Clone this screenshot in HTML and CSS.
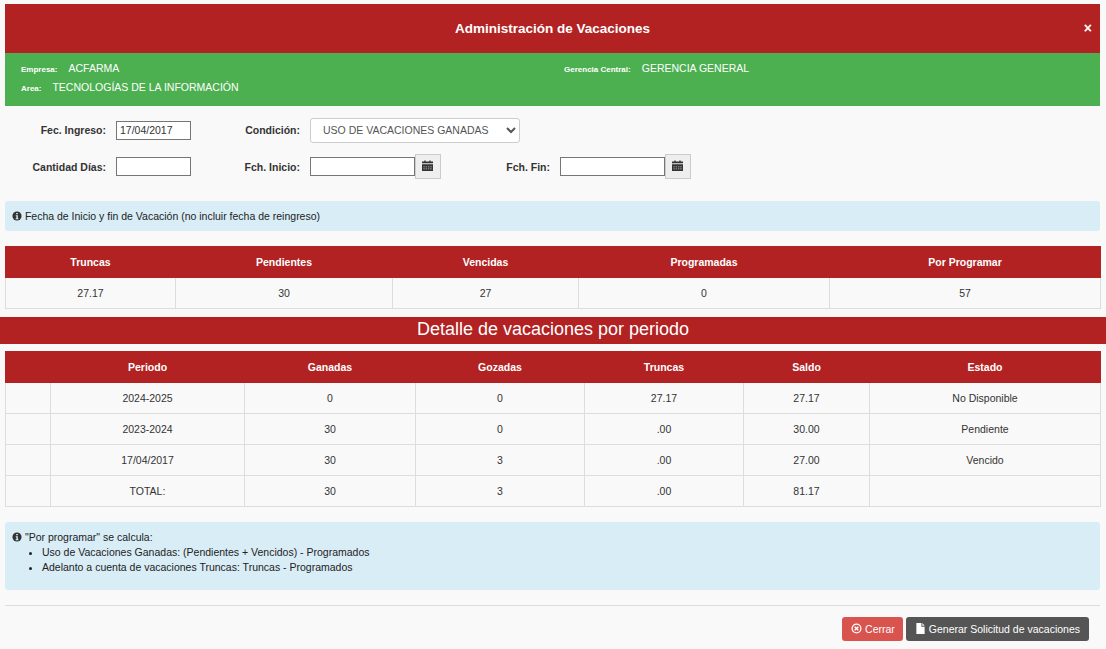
FILE: index.html
```html
<!DOCTYPE html>
<html lang="es">
<head>
<meta charset="utf-8">
<title>Administración de Vacaciones</title>
<link rel="stylesheet" href="styles.css">
</head>
<body>
<div class="wrap">
  <header class="modal-head">
    <h1>Administración de Vacaciones</h1>
    <span class="close">×</span>
  </header>
  <section class="green">
    <div class="green-col">
      <div class="g-row"><span class="g-label">Empresa:</span><span class="g-value">ACFARMA</span></div>
      <div class="g-row"><span class="g-label">Area:</span><span class="g-value">TECNOLOGÍAS DE LA INFORMACIÓN</span></div>
    </div>
    <div class="green-col">
      <div class="g-row"><span class="g-label">Gerencia Central:</span><span class="g-value">GERENCIA GENERAL</span></div>
    </div>
  </section>
  <form class="form">
    <div class="f-row">
      <label class="lab lab-a">Fec. Ingreso:</label>
      <input class="inp inp-s" type="text" value="17/04/2017">
      <label class="lab lab-b">Condición:</label>
      <select class="sel"><option>USO DE VACACIONES GANADAS</option></select>
    </div>
    <div class="f-row f-row2">
      <label class="lab lab-a">Cantidad Días:</label>
      <input class="inp inp-s" type="text">
      <label class="lab lab-b">Fch. Inicio:</label>
      <input class="inp inp-d" type="text">
      <span class="addon"><svg class="cal" viewBox="0 0 12 12"><path d="M2.5 0.5h1.500v1h4v-1h1.500v1h2.500v2H0v-2h2.500z M0 4.500h12V12H0z" fill="#333"/><path d="M1.500 7h1.500v.8H1.500zM4 7h1.500v.8H4zM6.500 7H8v.8H6.500zM9 7h1.500v.8H9zM1.500 9.300h1.500v.8H1.500zM4 9.300h1.500v.8H4zM6.500 9.300H8v.8H6.500zM9 9.300h1.500v.8H9z" fill="#ccc"/></svg></span>
      <label class="lab lab-c">Fch. Fin:</label>
      <input class="inp inp-d" type="text">
      <span class="addon"><svg class="cal" viewBox="0 0 12 12"><path d="M2.5 0.5h1.500v1h4v-1h1.500v1h2.500v2H0v-2h2.500z M0 4.500h12V12H0z" fill="#333"/><path d="M1.500 7h1.500v.8H1.500zM4 7h1.500v.8H4zM6.500 7H8v.8H6.500zM9 7h1.500v.8H9zM1.500 9.300h1.500v.8H1.500zM4 9.300h1.500v.8H4zM6.500 9.300H8v.8H6.500zM9 9.300h1.500v.8H9z" fill="#ccc"/></svg></span>
    </div>
  </form>
  <div class="alert alert-one">
    <svg class="info" viewBox="0 0 12 12"><circle cx="6" cy="6" r="5.500" fill="#333"/><path d="M5 2.300h2v1.700H5zM4.500 5h2.500v3.800h.7V10H4.400V8.800h.9V6.200h-.8z" fill="#d9edf7"/></svg>
    Fecha de Inicio y fin de Vacación (no incluir fecha de reingreso)
  </div>
  <table class="tbl tbl-sum">
    <colgroup><col class="s1"><col class="s2"><col class="s3"><col class="s4"><col class="s5"></colgroup>
    <thead><tr><th>Truncas</th><th>Pendientes</th><th>Vencidas</th><th>Programadas</th><th>Por Programar</th></tr></thead>
    <tbody><tr><td>27.17</td><td>30</td><td>27</td><td>0</td><td>57</td></tr></tbody>
  </table>
</div>
<h2 class="band">Detalle de vacaciones por periodo</h2>
<div class="wrap">
  <table class="tbl tbl-det">
    <colgroup><col class="d0"><col class="d1"><col class="d2"><col class="d3"><col class="d4"><col class="d5"><col class="d6"></colgroup>
    <thead><tr><th></th><th>Periodo</th><th>Ganadas</th><th>Gozadas</th><th>Truncas</th><th>Saldo</th><th>Estado</th></tr></thead>
    <tbody>
      <tr><td></td><td>2024-2025</td><td>0</td><td>0</td><td>27.17</td><td>27.17</td><td>No Disponible</td></tr>
      <tr><td></td><td>2023-2024</td><td>30</td><td>0</td><td>.00</td><td>30.00</td><td>Pendiente</td></tr>
      <tr><td></td><td>17/04/2017</td><td>30</td><td>3</td><td>.00</td><td>27.00</td><td>Vencido</td></tr>
      <tr><td></td><td>TOTAL:</td><td>30</td><td>3</td><td>.00</td><td>81.17</td><td></td></tr>
    </tbody>
  </table>
  <div class="alert alert-two">
    <div><svg class="info" viewBox="0 0 12 12"><circle cx="6" cy="6" r="5.500" fill="#333"/><path d="M5 2.300h2v1.700H5zM4.500 5h2.500v3.800h.7V10H4.400V8.800h.9V6.200h-.8z" fill="#d9edf7"/></svg> "Por programar" se calcula:</div>
    <ul>
      <li>Uso de Vacaciones Ganadas: (Pendientes + Vencidos) - Programados</li>
      <li>Adelanto a cuenta de vacaciones Truncas: Truncas - Programados</li>
    </ul>
  </div>
  <footer class="foot">
    <button class="btn btn-red" type="button"><svg class="b-ico" viewBox="0 0 12 12"><circle cx="6" cy="6" r="4.800" fill="none" stroke="#fff" stroke-width="1.400"/><path d="M4 4l4 4M8 4l-4 4" stroke="#fff" stroke-width="1.500"/></svg> Cerrar</button>
    <button class="btn btn-dark" type="button"><svg class="b-ico" viewBox="0 0 12 12"><path d="M1.500 0H7v4h3.500v8h-9z M8 0l2.500 3H8z" fill="#fff"/></svg> Generar Solicitud de vacaciones</button>
  </footer>
</div>
</body>
</html>
```
FILE: styles.css
```css
* { box-sizing: border-box; }
html, body { margin: 0; padding: 0; }
body {
  background: #f9f9f9;
  color: #333;
  font-family: "Liberation Sans", Arial, sans-serif;
  font-size: 10.5px;
  padding-top: 4px;
  height: 649px;
  overflow: hidden;
}
.wrap { margin: 0 6px 0 5px; }

.modal-head {
  background: #b22222;
  height: 49px;
  display: flex;
  align-items: center;
  justify-content: center;
  position: relative;
  color: #fff;
  padding-bottom: 1px;
}
.modal-head h1 { margin: 0; font-size: 13.5px; font-weight: 700; }
.close { position: absolute; right: 8px; top: 15px; font-size: 14px; font-weight: 700; line-height: 18px; }

.green {
  background: #4caf50;
  height: 53px;
  color: #fff;
  display: flex;
  padding: 9px 0 0 16px;
}
.green-col { width: 548px; }
.green-col:first-child { width: 547px; margin-right: 8px; }
.g-row { display: flex; align-items: baseline; height: 19px; }
.g-label { font-size: 8px; font-weight: 700; margin-right: 11px; }
.g-value { font-size: 10.5px; }

.form { padding-top: 14px; height: 95px; }
.f-row { display: flex; align-items: center; height: 20px; }
.f-row2 { margin-top: 14px; height: 25px; }
.lab { font-size: 10.5px; font-weight: 700; color: #333; text-align: right; margin-right: 10px; }
.lab-a { width: 101px; }
.lab-b { width: 109px; }
.lab-c { width: 109px; }
.inp {
  height: 19px;
  border: 1px solid #767676;
  background: #fff;
  font: 10.5px "Liberation Sans", Arial, sans-serif;
  color: #333;
  padding: 0 3px;
  border-radius: 0;
  outline: 0;
}
.inp-s { width: 75px; }
.inp-d { width: 105px; }
.sel {
  width: 210px;
  height: 25px;
  border: 1px solid #ccc;
  border-radius: 3px;
  background: #fff;
  font: 10.5px "Liberation Sans", Arial, sans-serif;
  color: #555;
  padding: 0 8px;
}
.addon {
  width: 26px;
  height: 25px;
  background: #eee;
  border: 1px solid #ccc;
  display: flex;
  align-items: center;
  justify-content: center;
  padding: 0 1px 2px 0;
}
.cal { width: 11px; height: 11px; }

.alert {
  background: #d9edf7;
  border-radius: 3px;
  color: #222;
}
.alert-one { height: 30px; padding: 8px 7px; line-height: 14px; }
.alert-two { margin-top: 15px; height: 68px; padding: 8px 7px; line-height: 15px; }
.alert-two ul { margin: 0; padding-left: 30px; }
.info { width: 10px; height: 10px; vertical-align: -1px; }

.tbl { width: 100%; border-collapse: collapse; table-layout: fixed; }
.tbl th {
  background: #b22222;
  color: #fff;
  border: 1px solid #b22222;
  font-size: 10.5px;
  font-weight: 700;
  text-align: center;
  padding: 0;
}
.tbl td {
  border: 1px solid #ddd;
  text-align: center;
  padding: 0;
}
.tbl-sum { margin-top: 15px; }
.tbl-sum th { height: 31px; }
.tbl-sum td { height: 31px; }
.s1 { width: 170px; } .s2 { width: 217px; } .s3 { width: 186px; } .s4 { width: 251px; } .s5 { width: 271px; }
.tbl-det th { height: 31px; }
.tbl-det td { height: 31px; }
.d0 { width: 45px; } .d1 { width: 194px; } .d2 { width: 171px; } .d3 { width: 169px; } .d4 { width: 159px; } .d5 { width: 126px; } .d6 { width: 231px; }

.band {
  margin: 8px 0 7px;
  background: #b22222;
  color: #fff;
  height: 27px;
  line-height: 25px;
  text-align: center;
  font-size: 18px;
  font-weight: 400;
}

.foot {
  margin-top: 15px;
  border-top: 1px solid #ddd;
  padding: 11px 11px 0 0;
  display: flex;
  justify-content: flex-end;
  gap: 3px;
}
.btn {
  height: 24px;
  border: 1px solid transparent;
  border-radius: 3px;
  color: #fff;
  font: 10.5px "Liberation Sans", Arial, sans-serif;
  padding: 0 8px;
  display: flex;
  align-items: center;
  gap: 3px;
}
.btn-red { background: #d9534f; padding-right: 7px; }
.btn-dark { background: #555; }
.b-ico { width: 11px; height: 11px; margin-bottom: 2px; }
```
